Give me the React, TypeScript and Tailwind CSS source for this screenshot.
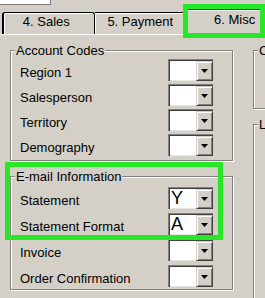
import React from "react";

const Dropdown = ({ value }: { value?: string }) => (
  <div className="flex h-[22px] w-[45px] shrink-0 border-t border-l border-[#808080]">
    <div className="flex flex-1 border-t border-l border-[#404040]">
      <div className="w-[26px] bg-white border-b border-b-[#e8e6e2] text-[18px] leading-[18px] text-black pl-[1px] overflow-hidden">
        {value}
      </div>
      <div className="w-[17px] flex items-center justify-center bg-[#d4d0c8] border border-t-[#d4d0c8] border-l-[#d4d0c8] border-b-[#404040] border-r-[#404040] shadow-[inset_1px_1px_0_#fff,inset_-1px_-1px_0_#808080]">
        <svg width="7" height="4" viewBox="0 0 7 4">
          <path d="M0 0h7L3.5 4z" fill="#000" />
        </svg>
      </div>
    </div>
  </div>
);

const Row = ({ label, value }: { label: string; value?: string }) => (
  <div className="flex items-center justify-between h-[22px]">
    <span className="pt-[4px] whitespace-nowrap">{label}</span>
    <Dropdown value={value} />
  </div>
);

const Group = ({
  title,
  className,
  children,
}: {
  title: string;
  className: string;
  children?: React.ReactNode;
}) => (
  <div
    className={`relative shrink-0 border border-[#808080] shadow-[1px_1px_0_#fff,inset_1px_1px_0_#fff] ${className}`}
  >
    <span className="absolute left-[4px] top-[-8px] bg-[#d4d0c8] px-[1px] whitespace-nowrap">
      {title}
    </span>
    {children}
  </div>
);

export default function App() {
  return (
    <div className="relative w-[265px] h-[298px] overflow-hidden bg-[#d4d0c8] font-['Liberation_Sans',Arial,sans-serif] text-[13px] leading-[15px] text-black">
      <div className="h-[9px]">
        <div className="w-[51px] h-[5px] bg-white border-r border-b border-[#808080]" />
      </div>
      <div className="flex items-end h-[25px] pl-[2px]">
        <div className="w-[94px] h-[22px] flex justify-center pr-[5px] pt-[1px] border-t border-l-2 border-r border-black rounded-t-[3px] shadow-[inset_1px_1px_0_#fff]">
          4. Sales
        </div>
        <div className="w-[94px] h-[22px] flex justify-center pt-[1px] border-t border-r border-black rounded-tr-[3px] shadow-[inset_1px_1px_0_#fff]">
          5. Payment
        </div>
        <div className="w-[80px] h-[25px] shrink-0 ml-[-2px] pl-[28px] pt-[2px] border-t border-l border-[#404040] rounded-tl-[3px] shadow-[inset_1px_1px_0_#fff]">
          6. Misc
        </div>
      </div>
      <div className="border-t border-white flex gap-[20px] pl-[10px] pt-[15px]">
        <div className="flex flex-col gap-[15px] w-[223px] shrink-0">
          <Group title="Account Codes" className="w-[223px] pl-[9px] pr-[19px] pt-[8px] pb-[4px]">
            <div className="flex flex-col gap-[3px]">
              <Row label="Region 1" />
              <Row label="Salesperson" />
              <Row label="Territory" />
              <Row label="Demography" />
            </div>
          </Group>
          <Group title="E-mail Information" className="w-[223px] pl-[9px] pr-[19px] pt-[10px] pb-[2px]">
            <div className="flex flex-col gap-[4px]">
              <Row label="Statement" value="Y" />
              <Row label="Statement Format" value="A" />
              <Row label="Invoice" />
              <Row label="Order Confirmation" />
            </div>
          </Group>
        </div>
        <div className="flex flex-col gap-[15px] w-[100px] shrink-0">
          <Group title="C" className="w-[100px] h-[59px]" />
          <Group title="L" className="w-[100px] h-[200px]" />
        </div>
      </div>
      <div className="pointer-events-none absolute left-[183px] top-[4px] w-[82px] h-[34px] border-[5px] border-[#26e826]" />
      <div className="pointer-events-none absolute left-[5px] top-[162px] w-[218px] h-[78px] border-[5px] border-[#26e826]" />
    </div>
  );
}
